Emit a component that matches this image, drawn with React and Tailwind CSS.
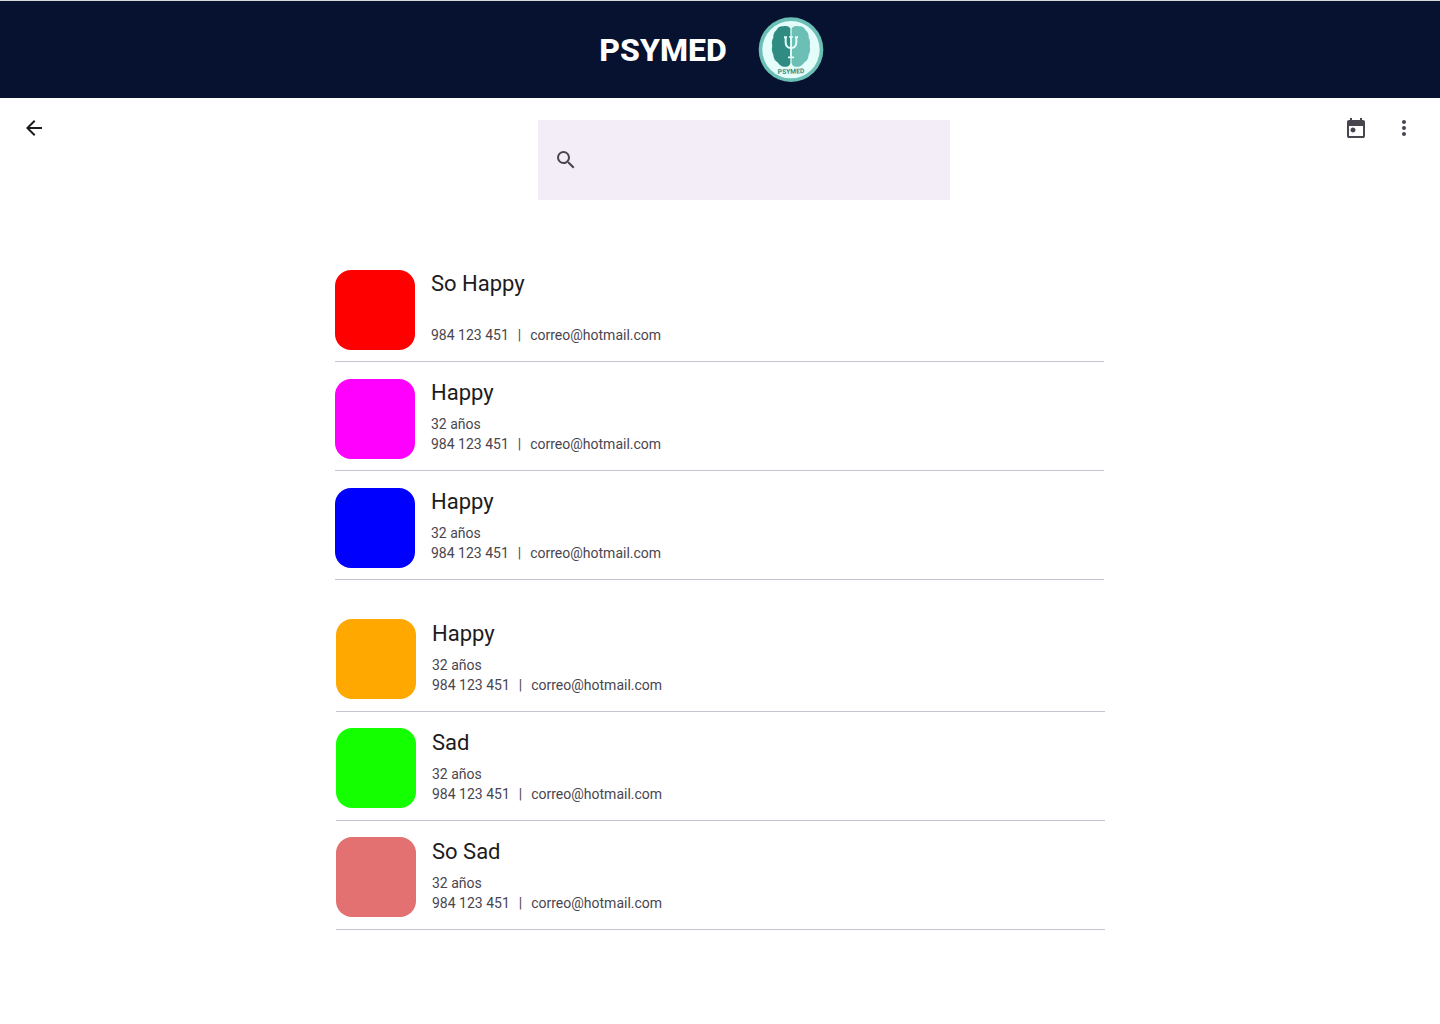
import React from "react";
import { MdArrowBack, MdMoreVert, MdSearch } from "react-icons/md";

const groups = [
  {
    className: "mr-px gap-[17px]",
    rowClassName: "pb-[11px]",
    textClassName: "",
    people: [
      { name: "So Happy", age: "", color: "bg-[#ff0000]" },
      { name: "Happy", age: "32 años", color: "bg-[#ff00ff]" },
      { name: "Happy", age: "32 años", color: "bg-[#0000ff]" },
    ],
  },
  {
    className: "ml-px gap-4",
    rowClassName: "pb-3",
    textClassName: "pt-px",
    people: [
      { name: "Happy", age: "32 años", color: "bg-[#ffa800]" },
      { name: "Sad", age: "32 años", color: "bg-[#14ff00]" },
      { name: "So Sad", age: "32 años", color: "bg-[#e37171]" },
    ],
  },
];

function Logo() {
  return (
    <svg viewBox="25 26 198 198" className="size-[66px]" role="img" aria-label="Psymed">
      <circle cx="124" cy="124" r="97" fill="#6bbfb5" />
      <circle cx="124" cy="124" r="86" fill="#e4fdfb" />
      <path
        d="M122 60C118 53 108 51 101 54C91 53 83 58 80 66C73 72 70 80 71 88C66 96 66 105 68 113C65 122 67 132 71 139C71 150 77 158 84 162C90 172 99 177 107 175C115 176 121 171 122 164Z"
        fill="#2f8c82"
      />
      <path
        d="M126 60C130 53 140 51 147 54C157 53 165 58 168 66C175 72 178 80 177 88C182 96 182 105 180 113C183 122 181 132 177 139C177 150 171 158 164 162C158 172 149 177 141 175C133 176 127 171 126 164Z"
        fill="#6bbfb5"
      />
      <g fill="none" stroke="#e4fdfb">
        <path d="M124 84V148M115 147H133M118 86H130" strokeWidth="5" />
        <path d="M103 87H112M136 87H145M108 87V102C108 114 114 119 124 119S140 114 140 102V87" strokeWidth="6" />
      </g>
      <text
        x="124"
        y="196"
        textAnchor="middle"
        fontFamily="Roboto, sans-serif"
        fontWeight="700"
        fontSize="20"
        fill="#2f8c82"
        transform="rotate(-2 124 190)"
      >
        PSYMED
      </text>
    </svg>
  );
}

function CalendarIcon() {
  return (
    <svg viewBox="0 0 24 24" className="size-6" fill="currentColor" aria-hidden="true">
      <path d="M9 16.5q-1.05 0-1.775-.725T6.5 14t.725-1.775T9 11.5t1.775.725T11.500 14t-.725 1.775T9 16.500ZM5 22q-.825 0-1.412-.587T3 20V6q0-.825.588-1.412T5 4h1V2h2v2h8V2h2v2h1q.825 0 1.413.588T21 6v14q0 .825-.587 1.413T19 22H5Zm0-2h14V10H5v10Z" />
    </svg>
  );
}

function IconButton({ label, className, children }) {
  return (
    <button type="button" aria-label={label} className={`flex size-12 items-center justify-center rounded-full ${className}`}>
      {children}
    </button>
  );
}

function Person({ person, className, textClassName }) {
  return (
    <li className={`flex gap-4 border-b border-[#c4c4cf] ${className}`}>
      <div className={`size-20 shrink-0 rounded-2xl ${person.color}`} />
      <div className={`min-w-0 text-sm leading-5 text-[#49454f] ${textClassName}`}>
        <h2 className="mb-[7px] text-[22px] leading-7 text-[#1d1b20]">{person.name}</h2>
        <p className="h-5">{person.age}</p>
        <p className="flex gap-[9px]">
          <span>984 123 451</span>
          <span>|</span>
          <span>correo@hotmail.com</span>
        </p>
      </div>
    </li>
  );
}

export default function App() {
  return (
    <div className="min-h-screen bg-white font-['Roboto',sans-serif]">
      <header className="flex items-center justify-center gap-[31px] border-t border-[#d5dbd8] bg-[#071130] pt-4 pr-[17px] pb-[15px] text-white">
        <h1 className="text-[32px] leading-10 font-extrabold">PSYMED</h1>
        <Logo />
      </header>
      <main>
        <div className="grid grid-cols-[1fr_auto_1fr] items-start pt-1.5 pr-3 pl-2.5">
          <IconButton label="Volver" className="text-[#1d1b20]">
            <MdArrowBack className="size-6" />
          </IconButton>
          <label className="mt-4 ml-[50px] flex h-20 w-[412px] items-center gap-4 bg-[#f3edf8] px-4 text-[#49454f]">
            <MdSearch className="size-6 shrink-0" />
            <input type="search" aria-label="Buscar" className="h-full w-full bg-transparent outline-none" />
          </label>
          <div className="flex justify-end text-[#49454f]">
            <IconButton label="Calendario" className="">
              <CalendarIcon />
            </IconButton>
            <IconButton label="Más opciones" className="">
              <MdMoreVert className="size-6" />
            </IconButton>
          </div>
        </div>
        <div className="mx-auto mt-[70px] flex w-full max-w-[770px] flex-col gap-[39px] pb-10">
          {groups.map((group, g) => (
            <ul key={g} className={`flex flex-col ${group.className}`}>
              {group.people.map((person, i) => (
                <Person key={i} person={person} className={group.rowClassName} textClassName={group.textClassName} />
              ))}
            </ul>
          ))}
        </div>
      </main>
    </div>
  );
}
